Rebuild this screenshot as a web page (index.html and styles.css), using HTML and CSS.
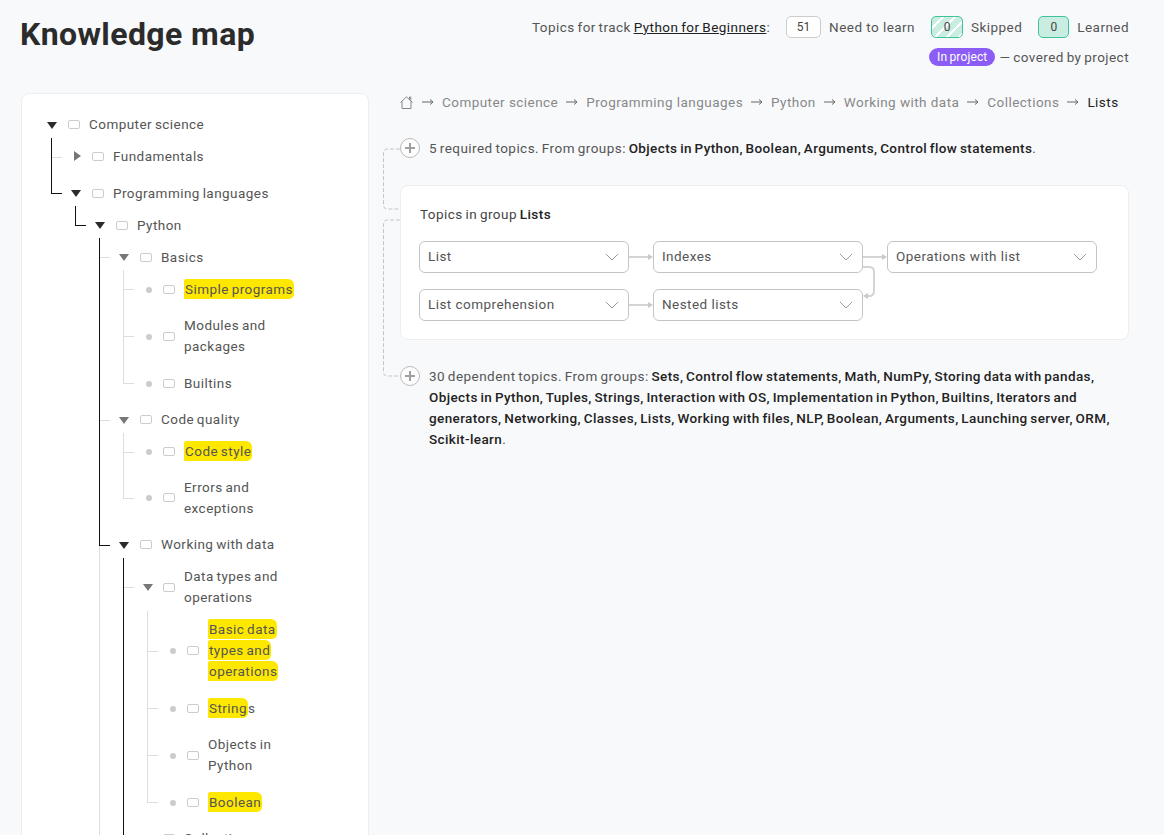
FILE: index.html
```html
<!DOCTYPE html>
<html lang="en">
<head>
<meta charset="utf-8">
<title>Knowledge map</title>
<link rel="stylesheet" href="styles.css">
</head>
<body>
<div class="page">
  <header class="header">
    <h1 class="title">Knowledge map</h1>
    <div class="legend">
      <div class="legend-row">
        <span class="legend-intro">Topics for track <a class="track" href="#">Python for Beginners</a>:</span>
        <span class="count count-todo">51</span><span class="count-label">Need to learn</span>
        <span class="count count-skip">0</span><span class="count-label">Skipped</span>
        <span class="count count-done">0</span><span class="count-label">Learned</span>
      </div>
      <div class="legend-row legend-row-second">
        <span class="badge">In project</span><span>— covered by project</span>
      </div>
    </div>
  </header>
  <main class="main">
    <aside class="panel">
      <ul class="tree">
        <li>
          <div class="row"><span class="toggle down dark"></span><span class="box"></span><span class="label">Computer science</span></div>
          <ul>
            <li class="up down-line">
              <div class="row"><span class="toggle right"></span><span class="box"></span><span class="label">Fundamentals</span></div>
            </li>
            <li class="up hit">
              <div class="row"><span class="toggle down dark"></span><span class="box"></span><span class="label">Programming languages</span></div>
              <ul>
                <li class="up hit">
                  <div class="row"><span class="toggle down dark"></span><span class="box"></span><span class="label">Python</span></div>
                  <ul>
                    <li class="up down-line">
                      <div class="row"><span class="toggle down"></span><span class="box"></span><span class="label">Basics</span></div>
                      <ul>
                        <li><div class="row"><span class="toggle dot"></span><span class="box"></span><span class="label"><span class="mark">Simple programs</span></span></div></li>
                        <li><div class="row"><span class="toggle dot"></span><span class="box"></span><span class="label">Modules and packages</span></div></li>
                        <li><div class="row"><span class="toggle dot"></span><span class="box"></span><span class="label">Builtins</span></div></li>
                      </ul>
                    </li>
                    <li class="up down-line">
                      <div class="row"><span class="toggle down"></span><span class="box"></span><span class="label">Code quality</span></div>
                      <ul class="tight">
                        <li><div class="row"><span class="toggle dot"></span><span class="box"></span><span class="label"><span class="mark">Code style</span></span></div></li>
                        <li><div class="row"><span class="toggle dot"></span><span class="box"></span><span class="label">Errors and exceptions</span></div></li>
                      </ul>
                    </li>
                    <li class="up hit">
                      <div class="row"><span class="toggle down dark"></span><span class="box"></span><span class="label">Working with data</span></div>
                      <ul>
                        <li class="up down-line">
                          <div class="row"><span class="toggle down shift"></span><span class="box"></span><span class="label">Data types and operations</span></div>
                          <ul>
                            <li><div class="row"><span class="toggle dot"></span><span class="box"></span><span class="label"><span class="mark">Basic data types and operations</span></span></div></li>
                            <li><div class="row"><span class="toggle dot"></span><span class="box"></span><span class="label"><span class="mark">String</span>s</span></div></li>
                            <li><div class="row"><span class="toggle dot"></span><span class="box"></span><span class="label">Objects in Python</span></div></li>
                            <li><div class="row"><span class="toggle dot"></span><span class="box"></span><span class="label"><span class="mark">Boolean</span></span></div></li>
                          </ul>
                        </li>
                        <li class="up hit">
                          <div class="row"><span class="toggle down shift"></span><span class="box"></span><span class="label">Collections</span></div>
                        </li>
                      </ul>
                    </li>
                    <li>
                      <div class="row"><span class="toggle right"></span><span class="box"></span><span class="label">Functions</span></div>
                    </li>
                  </ul>
                </li>
              </ul>
            </li>
          </ul>
        </li>
      </ul>
    </aside>
    <section class="content">
      <svg class="links" width="20" height="300" viewBox="0 0 20 300" aria-hidden="true">
        <path class="dash" d="M0 56H-12.500Q-16.500 56 -16.500 60V112Q-16.500 116 -12.500 116H0"/>
        <path class="dash" d="M0 127H-12.500Q-16.500 127 -16.500 131V279Q-16.500 283 -12.500 283H0"/>
      </svg>
      <nav class="crumbs">
        <svg class="home" width="13" height="13" viewBox="0 0 13 13" aria-hidden="true"><path d="M.5 6.500 6.500 .8 12.500 6.500M2 5.200V12.500H11V5.200M9.500 3.500V1H10.800V4.700" fill="none" stroke="#888" stroke-width="1"/></svg>
        <svg class="sep" width="12" height="8" viewBox="0 0 12 8" aria-hidden="true"><path d="M0 4H11M8 1.500 11 4 8 6.500" fill="none" stroke="#666" stroke-width="1"/></svg><span>Computer science</span>
        <svg class="sep" width="12" height="8" viewBox="0 0 12 8" aria-hidden="true"><path d="M0 4H11M8 1.500 11 4 8 6.500" fill="none" stroke="#666" stroke-width="1"/></svg><span>Programming languages</span>
        <svg class="sep" width="12" height="8" viewBox="0 0 12 8" aria-hidden="true"><path d="M0 4H11M8 1.500 11 4 8 6.500" fill="none" stroke="#666" stroke-width="1"/></svg><span>Python</span>
        <svg class="sep" width="12" height="8" viewBox="0 0 12 8" aria-hidden="true"><path d="M0 4H11M8 1.500 11 4 8 6.500" fill="none" stroke="#666" stroke-width="1"/></svg><span>Working with data</span>
        <svg class="sep" width="12" height="8" viewBox="0 0 12 8" aria-hidden="true"><path d="M0 4H11M8 1.500 11 4 8 6.500" fill="none" stroke="#666" stroke-width="1"/></svg><span>Collections</span>
        <svg class="sep" width="12" height="8" viewBox="0 0 12 8" aria-hidden="true"><path d="M0 4H11M8 1.500 11 4 8 6.500" fill="none" stroke="#666" stroke-width="1"/></svg><span class="crumb-now">Lists</span>
      </nav>
      <div class="topics topics-required">
        <span class="plus"></span>
        <p class="topics-text">5 required topics. From groups: <b>Objects in Python, Boolean, Arguments, Control flow statements</b>.</p>
      </div>
      <div class="card">
        <h2 class="card-title">Topics in group <b>Lists</b></h2>
        <div class="grid">
          <div class="select">List<svg class="chev" width="14" height="8" viewBox="0 0 14 8"><path d="M1 1 7 7 13 1"/></svg><svg class="link-right" width="24" height="10" viewBox="0 0 24 10"><path class="line" d="M0 5H20"/><path class="head" d="M19 2 24 5 19 8Z"/></svg></div>
          <div class="select">Indexes<svg class="chev" width="14" height="8" viewBox="0 0 14 8"><path d="M1 1 7 7 13 1"/></svg><svg class="link-right" width="24" height="10" viewBox="0 0 24 10"><path class="line" d="M0 5H20"/><path class="head" d="M19 2 24 5 19 8Z"/></svg><svg class="link-down" width="12" height="32" viewBox="0 0 12 32"><path class="line" d="M0 1H6Q11 1 11 6V25Q11 30 6 30H4"/><path class="head" d="M5 27 0 30 5 33Z"/></svg></div>
          <div class="select">Operations with list<svg class="chev" width="14" height="8" viewBox="0 0 14 8"><path d="M1 1 7 7 13 1"/></svg></div>
          <div class="select">List comprehension<svg class="chev" width="14" height="8" viewBox="0 0 14 8"><path d="M1 1 7 7 13 1"/></svg><svg class="link-right" width="24" height="10" viewBox="0 0 24 10"><path class="line" d="M0 5H20"/><path class="head" d="M19 2 24 5 19 8Z"/></svg></div>
          <div class="select">Nested lists<svg class="chev" width="14" height="8" viewBox="0 0 14 8"><path d="M1 1 7 7 13 1"/></svg></div>
        </div>
      </div>
      <div class="topics topics-dependent">
        <span class="plus"></span>
        <p class="topics-text">30 dependent topics. From groups: <b>Sets, Control flow statements, Math, NumPy, Storing data with pandas, Objects in Python, Tuples, Strings, Interaction with OS, Implementation in Python, Builtins, Iterators and generators, Networking, Classes, Lists, Working with files, NLP, Boolean, Arguments, Launching server, ORM, Scikit-learn</b>.</p>
      </div>
    </section>
  </main>
</div>
</body>
</html>
```
FILE: styles.css
```css
* { box-sizing: border-box; }
html, body { margin: 0; height: 100%; overflow: hidden; }
body {
  background: #f8f9fb;
  color: #555;
  font-family: Roboto, "Liberation Sans", sans-serif;
  font-size: 13.500px;
  line-height: 21px;
  letter-spacing: .45px;
  word-spacing: -1px;
}
.page { padding: 0 35px 0 20px; }

.header { display: flex; justify-content: space-between; height: 93px; }
.title { margin: 14px 0 0; color: #2b2b2b; font-size: 32px; line-height: 40px; font-weight: 700; letter-spacing: .4px; word-spacing: 0; }
.legend { padding-top: 16px; }
.legend-row { display: flex; align-items: center; justify-content: flex-end; height: 22px; }
.legend-row-second { margin-top: 9px; height: 20px; }
.legend-intro { margin-right: 16px; }
.track { color: #222; text-decoration: underline; }
.count { display: flex; align-items: center; justify-content: center; height: 22px; border: 1px solid #ccc; border-radius: 5px; background: #fff; color: #444; font-size: 12px; letter-spacing: 0; }
.count-todo { width: 35px; }
.count-skip, .count-done { width: 32px; border-color: #3dc49a; background: #c9eee1; }
.count-done { width: 31px; }
.count-skip { background: repeating-linear-gradient(135deg, #c9eee1 0 7px, #fff 7px 8.500px); }
.count-label { margin: 0 16px 0 8px; word-spacing: 0; }
.count-label:last-child { margin-right: 0; }
.badge { margin-right: 4px; padding: 0 8px; height: 18px; border-radius: 9px; background: #8b5cf6; color: #fff; font-size: 12px; line-height: 18px; letter-spacing: .15px; }

.main { display: flex; gap: 31px; margin-left: 1px; }
.panel { flex: 0 0 348px; height: 1400px; padding: 20px 68px 0 23px; border: 1px solid #eee; border-radius: 8px; background: #fff; }

.tree, .tree ul { margin: 0; padding: 0; list-style: none; }
.tree ul { margin-top: 11px; padding-left: 24px; }
.tree li { position: relative; }
.tree li + li { margin-top: 15.500px; }
.tree ul.tight > li + li { margin-top: 14.500px; }
.tree ul > li::after { content: ""; position: absolute; left: -18px; top: 0; bottom: 0; width: 1px; background: #ddd; }
.tree ul > li:last-child::after { display: none; }
.row { position: relative; display: flex; align-items: center; gap: 9px; min-height: 21px; }
.tree ul > li > .row::before { content: ""; position: absolute; left: -17px; top: 50%; width: 10px; height: 1px; background: #ddd; }
.tree ul > li > .row::after { content: ""; position: absolute; z-index: 1; left: -18px; top: -15.500px; bottom: calc(50% - 1px); width: 1px; background: #ddd; }
.tree ul > li:first-child > .row::after { top: -8.500px; }
.tree li.up > .row::after { background: #111; }
.tree li.down-line::after { background: #111; }
.tree li.hit > .row::before { background: #111; }

.toggle { position: relative; flex: 0 0 14px; height: 14px; }
.toggle::before { content: ""; position: absolute; }
.toggle.down::before { left: 1.500px; top: 4px; border-left: 5.500px solid transparent; border-right: 5.500px solid transparent; border-top: 7px solid #777; }
.toggle.dark::before { border-top-color: #2b2b2b; }
.toggle.right::before { left: 5px; top: 1.500px; border-top: 5.500px solid transparent; border-bottom: 5.500px solid transparent; border-left: 7px solid #777; }
.toggle.shift { margin-left: -1px; }
.toggle.shift::before { left: 2.500px; }
.toggle.dot { margin-left: -1px; }
.toggle.dot::before { left: 5.500px; top: 4.500px; width: 6px; height: 6px; border-radius: 50%; background: #ccc; }
.box { flex: 0 0 12px; height: 9px; border: 1px solid #ccc; border-radius: 2px; background: #fff; }
.label { min-width: 0; }
.mark { padding: 2px 1px; background: #ffe800; border-radius: 2px 6px 5px 1px; -webkit-box-decoration-break: clone; box-decoration-break: clone; }

.content { position: relative; flex: 0 0 729px; }
.links { position: absolute; left: 0; top: 0; overflow: visible; }
.links path { fill: none; }
.dash { stroke: #c4c4c4; stroke-width: 1; stroke-dasharray: 4 2; }
.crumbs { display: flex; align-items: center; gap: 8px; height: 18px; color: #888; white-space: nowrap; word-spacing: 0; }
.home, .sep { flex: none; }
.home { margin-right: 1px; }
.crumb-now { color: #222; }
.topics { display: flex; align-items: flex-start; gap: 9px; }
.topics-required { margin-top: 26.500px; }
.topics-dependent { margin-top: 25.500px; }
.topics-text { margin: 0; }
.topics-text b { color: #222; font-weight: 500; letter-spacing: .39px; }
.plus { position: relative; flex: 0 0 20px; height: 20px; border: 1px solid #bbb; border-radius: 50%; background: #fdfdfd; }
.plus::before, .plus::after { content: ""; position: absolute; background: #a0a0a0; }
.plus::before { left: 4px; right: 4px; top: 8px; height: 2px; }
.plus::after { top: 4px; bottom: 4px; left: 8px; width: 2px; }
.card { margin-top: 26.500px; height: 155px; padding: 17.500px 18px 0 19px; border: 1px solid #eee; border-radius: 8px; background: #fff; }
.card-title { margin: 0; color: #444; font-size: 13.500px; line-height: 21px; font-weight: 400; }
.card-title b { color: #222; font-weight: 500; }
.grid { display: grid; grid-template-columns: repeat(3, 210px); grid-auto-rows: 32px; gap: 16px 24px; margin-top: 16.500px; margin-left: -1px; }
.select { position: relative; display: flex; align-items: center; justify-content: space-between; padding: 0 9px 1px 8px; border: 1px solid #c4c4c4; border-radius: 6px; background: #fff; word-spacing: 0; }
.chev { flex: none; fill: none; stroke: #999; stroke-width: 1; }
.link-right { position: absolute; left: 100%; top: 10px; margin-left: 1px; }
.link-down { position: absolute; left: 100%; top: 24px; overflow: visible; margin-left: 1px; }
.line { fill: none; stroke: #d4d4d4; stroke-width: 2; }
.head { fill: #c8c8c8; }
```
